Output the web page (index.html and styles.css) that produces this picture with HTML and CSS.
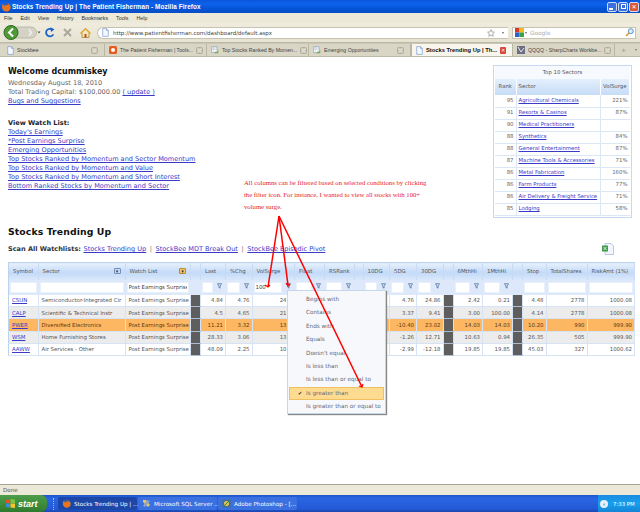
FILE: index.html
```html
<!DOCTYPE html>
<html lang="en">
<head>
  <meta charset="UTF-8">
  <meta name="viewport" content="width=device-width, initial-scale=1.0">
  <title>Stocks Trending Up | The Patient Fisherman - Mozilla Firefox</title>
  <link rel="stylesheet" href="styles.css">
</head>
<body>

  <svg class="defs" width="0" height="0">
    <symbol id="funnel" viewBox="0 0 7 8">
      <path d="M.5.8h6L4.3 4v3L2.7 6.2V4z" fill="#cfe0f5" stroke="#34558a" stroke-width=".8"/>
    </symbol>
    <symbol id="page" viewBox="0 0 10 12">
      <path d="M1 .5h5.500L9 3v8.500H1z" fill="#f4f8ff" stroke="#7d9ccf"/>
      <path d="M6.500.5V3H9" fill="#cfdef5" stroke="#7d9ccf"/>
    </symbol>
    <symbol id="chart" viewBox="0 0 12 12">
      <path d="M1 1h8v9H1z" fill="#fff" stroke="#8a9ab5"/>
      <path d="M2 3h6M2 5h6M4 1v8" stroke="#a8b6cc" stroke-width=".7"/>
      <path d="M5 11l2-3 1.500 1.500L11 6v5z" fill="#6cb33f"/>
    </symbol>
    <symbol id="close" viewBox="0 0 7 7">
      <rect x=".5" y=".5" width="6" height="6" rx="1" fill="#cfccbc" stroke="#b2afa0"/>
      <path d="M2.200 2.200l2.600 2.600M4.800 2.200L2.200 4.800" stroke="#f1efe6" stroke-width=".8"/>
    </symbol>
    <symbol id="fox" viewBox="0 0 12 12">
      <circle cx="6" cy="6" r="5.500" fill="#2f5fb8"/>
      <path d="M2 2.500C.5 6 1.500 11.500 6.500 11.500c3.500 0 5.500-3 5-5.500C11 3.500 9.500 2 8 1.500c.8 1 1 2 .5 2.500C7 3 5 3.500 4.500 5 3.800 4.500 3 3.500 2 2.500z" fill="#e8741c"/>
    </symbol>
  </svg>

  <!-- Browser chrome -->
  <div class="titlebar">
    <svg class="title-icon" width="10" height="10"><use href="#fox"/></svg>
    <span class="title-text">Stocks Trending Up | The Patient Fisherman - Mozilla Firefox</span>
    <div class="win-buttons">
      <span class="win-btn"><i class="win-min"></i></span>
      <span class="win-btn"><i class="win-max"></i></span>
      <span class="win-btn win-close">✕</span>
    </div>
  </div>

  <div class="menubar">
    <span>File</span><span>Edit</span><span>View</span><span>History</span><span>Bookmarks</span><span>Tools</span><span>Help</span>
  </div>

  <div class="navbar">
    <svg class="nav-back" width="38" height="15" viewBox="0 0 38 15">
      <path d="M8 2h20a5.500 5.500 0 0 1 0 11H8z" fill="#d5d3c6" stroke="#b3b1a3" stroke-width=".8"/>
      <path d="M26 4.500l2.500 3-2.500 3" fill="none" stroke="#f4f3ec" stroke-width="1.400"/>
      <path d="M34.500 6.500h3l-1.500 2z" fill="#555"/>
      <circle cx="8" cy="7.500" r="7" fill="#4f9a37" stroke="#2c6a22"/>
      <path d="M10 3.500L6 7.500l4 4" fill="none" stroke="#fff" stroke-width="2"/>
    </svg>
    <svg class="nav-icon" width="10" height="11" viewBox="0 0 10 11">
      <path d="M8.300 7.300A3.800 3.800 0 1 1 7.500 2.800" fill="none" stroke="#1c64c8" stroke-width="1.800"/>
      <path d="M5.500.2L9.500 2.500 6 5z" fill="#1c64c8"/>
    </svg>
    <svg class="nav-icon" width="9" height="9" viewBox="0 0 9 9">
      <path d="M1 1l7 7M8 1L1 8" stroke="#a9a89c" stroke-width="2"/>
    </svg>
    <svg class="nav-icon nav-home" width="11" height="10" viewBox="0 0 11 10">
      <path d="M2 5v4.500h7V5" fill="#f6e5ad" stroke="#a0762a" stroke-width=".7"/>
      <path d="M.5 5.500L5.500.8l5 4.700" fill="none" stroke="#e2a21e" stroke-width="1.400"/>
      <rect x="4.500" y="6" width="2" height="3.500" fill="#b3541e"/>
    </svg>
    <div class="urlbar">
      <svg width="7" height="9"><use href="#page"/></svg>
      <span class="url-text">http://www.patientfisherman.com/dashboard/default.aspx</span>
      <svg class="url-star" width="8" height="8" viewBox="0 0 10 10">
        <path d="M5 .8l1.300 2.800 3 .4-2.200 2.100.6 3L5 7.600 2.300 9.100l.6-3L.7 4l3-.4z" fill="#fff" stroke="#85837a" stroke-width=".8"/>
      </svg>
      <span class="url-drop"></span>
    </div>
    <div class="searchbar">
      <svg width="9" height="9" viewBox="0 0 9 9">
        <rect width="4.500" height="4.500" fill="#d9352a"/>
        <rect x="4.500" width="4.500" height="4.500" fill="#f0bb1e"/>
        <rect y="4.500" width="4.500" height="4.500" fill="#2a62c9"/>
        <rect x="4.500" y="4.500" width="4.500" height="4.500" fill="#3aa14a"/>
      </svg>
      <span class="url-drop"></span>
      <span class="search-text">Google</span>
      <svg class="search-icon" width="9" height="9" viewBox="0 0 9 9">
        <circle cx="5.800" cy="3.200" r="2.500" fill="#d8ecfa" stroke="#5b93c7"/>
        <path d="M4 5L1 8" stroke="#d09a3c" stroke-width="1.600"/>
      </svg>
    </div>
  </div>

  <div class="tabbar">
    <div class="tab"><svg width="7" height="9"><use href="#page"/></svg><span>Stockbee</span><svg class="tab-x" width="7" height="7"><use href="#close"/></svg></div>
    <div class="tab"><svg width="8" height="8" viewBox="0 0 8 8"><rect width="8" height="8" rx="1.500" fill="#e85c1e"/><circle cx="4" cy="4" r="2" fill="#fff"/></svg><span>The Patient Fisherman | Tools...</span><svg class="tab-x" width="7" height="7"><use href="#close"/></svg></div>
    <div class="tab"><svg width="8" height="8"><use href="#chart"/></svg><span>Top Stocks Ranked By Momen...</span><svg class="tab-x" width="7" height="7"><use href="#close"/></svg></div>
    <div class="tab"><svg width="8" height="8"><use href="#chart"/></svg><span>Emerging Opportunities</span><svg class="tab-x" width="7" height="7"><use href="#close"/></svg></div>
    <div class="tab tab-active"><svg width="7" height="9"><use href="#page"/></svg><span>Stocks Trending Up | Th...</span><span class="tab-red">✕</span></div>
    <div class="tab"><svg width="8" height="8" viewBox="0 0 8 8"><rect width="8" height="8" fill="#6d6d86"/><path d="M1 1l3 5 3-4" fill="none" stroke="#e4e4ee"/></svg><span>QQQQ - SharpCharts Workbe...</span><svg class="tab-x" width="7" height="7"><use href="#close"/></svg></div>
    <div class="tab-tools"><span class="tab-plus">+</span><span class="tab-arrow"></span></div>
  </div>

  <!-- Page -->
  <div class="content">
    <div class="top-row">
      <div class="welcome">
        <h1>Welcome dcummiskey</h1>
        <div class="muted">Wednesday August 18, 2010</div>
        <div class="muted">Total Trading Capital: $100,000.00 <a href="#">( update )</a></div>
        <div><a href="#">Bugs and Suggestions</a></div>
        <div class="watch-title">View Watch List:</div>
        <div><a href="#">Today's Earnings</a></div>
        <div><a href="#">*Post Earnings Surprise</a></div>
        <div><a href="#">Emerging Opportunities</a></div>
        <div><a href="#">Top Stocks Ranked by Momentum and Sector Momentum</a></div>
        <div><a href="#">Top Stocks Ranked by Momentum and Value</a></div>
        <div><a href="#">Top Stocks Ranked by Momentum and Short Interest</a></div>
        <div><a href="#">Bottom Ranked Stocks by Momentum and Sector</a></div>
      </div>

      <div class="sectors">
        <div class="sectors-title">Top 10 Sectors</div>
        <table class="sector-table">
          <thead>
            <tr><th class="s-rank">Rank</th><th class="s-name">Sector</th><th class="s-vol">VolSurge</th></tr>
          </thead>
          <tbody>
            <tr><td>95</td><td><a href="#">Agricultural Chemicals</a></td><td>221%</td></tr>
            <tr><td>91</td><td><a href="#">Resorts &amp; Casinos</a></td><td>87%</td></tr>
            <tr><td>90</td><td><a href="#">Medical Practitioners</a></td><td></td></tr>
            <tr><td>88</td><td><a href="#">Synthetics</a></td><td>84%</td></tr>
            <tr><td>88</td><td><a href="#">General Entertainment</a></td><td>87%</td></tr>
            <tr><td>87</td><td><a href="#">Machine Tools &amp; Accessories</a></td><td>71%</td></tr>
            <tr><td>86</td><td><a href="#">Metal Fabrication</a></td><td>160%</td></tr>
            <tr><td>86</td><td><a href="#">Farm Products</a></td><td>77%</td></tr>
            <tr><td>86</td><td><a href="#">Air Delivery &amp; Freight Service</a></td><td>71%</td></tr>
            <tr><td>85</td><td><a href="#">Lodging</a></td><td>58%</td></tr>
          </tbody>
        </table>
      </div>
    </div>

    <h2>Stocks Trending Up</h2>
    <div class="scan-row">
      <b>Scan All Watchlists:</b> <a href="#">Stocks Trending Up</a> <span class="pipe">|</span> <a href="#">StockBee MDT Break Out</a> <span class="pipe">|</span> <a href="#">StockBee Episodic Pivot</a>
      <svg class="excel" width="12" height="12" viewBox="0 0 12 12">
        <path d="M3 .5h6l2.500 2.500v8.500H3z" fill="#f2f6fc" stroke="#9fb4d3" stroke-width=".7"/>
        <rect x="0" y="2.500" width="6" height="6" fill="#3f9a4a"/>
        <path d="M1.500 4l3 3M4.500 4l-3 3" stroke="#fff" stroke-width=".8"/>
      </svg>
    </div>

    <table class="grid">
      <colgroup>
        <col class="c29"><col class="c87"><col class="c65"><col class="c10"><col class="c25"><col class="c26"><col class="c42"><col class="c30"><col class="c29"><col class="c9"><col class="c26"><col class="c27"><col class="c26"><col class="c10"><col class="c29"><col class="c30"><col class="c10"><col class="c23"><col class="c41"><col class="c48">
      </colgroup>
      <thead>
        <tr>
          <th>Symbol</th>
          <th><div class="th-drop">Sector<span class="drop-btn">▾</span></div></th>
          <th><div class="th-drop">Watch List<span class="drop-btn drop-on">▾</span></div></th>
          <th></th><th>Last</th><th>%Chg</th><th>VolSurge</th><th>Float</th><th>RSRank</th><th></th><th>10DG</th><th>5DG</th><th>30DG</th><th></th><th>6MthHi</th><th>1MthHi</th><th></th><th>Stop</th><th>TotalShares</th><th>RiskAmt (1%)</th>
        </tr>
        <tr class="filters">
          <td><div class="flt"><input class="box"></div></td>
          <td><div class="flt"><input class="box"></div></td>
          <td><div class="flt"><input class="box" value="Post Earnings Surprise"></div></td>
          <td></td>
          <td><div class="flt"><input class="box"><svg width="5" height="6"><use href="#funnel"/></svg></div></td>
          <td><div class="flt"><input class="box"><svg width="5" height="6"><use href="#funnel"/></svg></div></td>
          <td><div class="flt"><input class="box" value="100"><svg width="5" height="6"><use href="#funnel"/></svg></div></td>
          <td><div class="flt"><input class="box"><svg width="5" height="6"><use href="#funnel"/></svg></div></td>
          <td><div class="flt"><input class="box"><svg width="5" height="6"><use href="#funnel"/></svg></div></td>
          <td></td>
          <td><div class="flt"><input class="box"><svg width="5" height="6"><use href="#funnel"/></svg></div></td>
          <td><div class="flt"><input class="box"><svg width="5" height="6"><use href="#funnel"/></svg></div></td>
          <td><div class="flt"><input class="box"><svg width="5" height="6"><use href="#funnel"/></svg></div></td>
          <td></td>
          <td><div class="flt"><input class="box"><svg width="5" height="6"><use href="#funnel"/></svg></div></td>
          <td><div class="flt"><input class="box"><svg width="5" height="6"><use href="#funnel"/></svg></div></td>
          <td></td>
          <td><div class="flt"><input class="box"></div></td>
          <td><div class="flt"><input class="box"></div></td>
          <td><div class="flt"><input class="box"></div></td>
        </tr>
      </thead>
      <tbody>
        <tr>
          <td class="txt"><a href="#">CSUN</a></td><td class="txt">Semiconductor-Integrated Cir</td><td class="txt">Post Earnings Surprise</td><td class="dark"></td>
          <td>4.84</td><td>4.76</td><td class="under">24</td><td></td><td></td><td></td><td></td><td>4.76</td><td>24.86</td><td class="dark"></td><td>2.42</td><td>0.21</td><td class="dark"></td><td>4.48</td><td>2778</td><td>1000.08</td>
        </tr>
        <tr class="alt">
          <td class="txt"><a href="#">CALP</a></td><td class="txt">Scientific &amp; Technical Instr</td><td class="txt">Post Earnings Surprise</td><td class="dark"></td>
          <td>4.5</td><td>4.65</td><td class="under">21</td><td></td><td></td><td></td><td></td><td>3.37</td><td>9.41</td><td class="dark"></td><td>3.00</td><td>100.00</td><td class="dark"></td><td>4.14</td><td>2778</td><td>1000.08</td>
        </tr>
        <tr class="hot">
          <td class="txt"><a href="#">PWER</a></td><td class="txt">Diversified Electronics</td><td class="txt">Post Earnings Surprise</td><td class="dark"></td>
          <td>11.21</td><td>3.32</td><td class="under">13</td><td></td><td></td><td></td><td></td><td>-10.40</td><td>23.02</td><td class="dark"></td><td>14.03</td><td>14.03</td><td class="dark"></td><td>10.20</td><td>990</td><td>999.90</td>
        </tr>
        <tr class="alt">
          <td class="txt"><a href="#">WSM</a></td><td class="txt">Home Furnishing Stores</td><td class="txt">Post Earnings Surprise</td><td class="dark"></td>
          <td>28.33</td><td>3.06</td><td class="under">13</td><td></td><td></td><td></td><td></td><td>-1.26</td><td>12.71</td><td class="dark"></td><td>10.63</td><td>0.94</td><td class="dark"></td><td>26.35</td><td>505</td><td>999.90</td>
        </tr>
        <tr>
          <td class="txt"><a href="#">AAWW</a></td><td class="txt">Air Services - Other</td><td class="txt">Post Earnings Surprise</td><td class="dark"></td>
          <td>48.09</td><td>2.25</td><td class="under">10</td><td></td><td></td><td></td><td></td><td>-2.99</td><td>-12.18</td><td class="dark"></td><td>19.85</td><td>19.85</td><td class="dark"></td><td>45.03</td><td>327</td><td>1000.62</td>
        </tr>
      </tbody>
    </table>

    <!-- Filter menu, drawn over the grid -->
    <ul class="filter-menu">
      <li>Begins with</li>
      <li>Contains</li>
      <li>Ends with</li>
      <li>Equals</li>
      <li>Doesn't equal</li>
      <li>Is less than</li>
      <li>Is less than or equal to</li>
      <li class="checked">Is greater than</li>
      <li>Is greater than or equal to</li>
    </ul>

    <!-- Annotation added on the screenshot -->
    <p class="note">All columns can be filtered based on selected conditions by clicking<br>the filter icon. For instance, I wanted to view all stocks with 100+<br>volume surge.</p>
    <svg class="arrows" width="640" height="428" viewBox="0 56 640 428">
      <g fill="none" stroke="#f00" stroke-width="1.500">
        <path d="M279 215L268 286"/>
        <path d="M279 215L288 284"/>
        <path d="M279 215L362 386"/>
        <path d="M265 284l3 2 2-2M286 282l2 3 2-2M359 385l3 1 1-3" stroke-width="1.200"/>
      </g>
    </svg>
  </div>

  <div class="statusbar">Done</div>

  <div class="taskbar">
    <div class="start-btn">
      <svg width="9" height="9" viewBox="0 0 9 9">
        <path d="M0 1l4-1v4H0z" fill="#e8502a"/><path d="M4.500 0L9 .6V4H4.500z" fill="#7fc241"/>
        <path d="M0 4.500h4V8.500L0 8z" fill="#3c8ae0"/><path d="M4.500 4.500H9V9L4.500 8.500z" fill="#f5c52c"/>
      </svg>
      <span>start</span>
    </div>
    <span class="quick"></span>
    <div class="task task-active"><svg width="9" height="9"><use href="#fox"/></svg><span>Stocks Trending Up | ...</span></div>
    <div class="task">
      <svg width="9" height="9" viewBox="0 0 9 9"><path d="M1 1h3l4 5-2 2-5-5z" fill="#e6c86a"/><path d="M5 1l3 1-5 6-2-1z" fill="#8fa3c7"/></svg>
      <span>Microsoft SQL Server ...</span>
    </div>
    <div class="task">
      <svg width="9" height="9" viewBox="0 0 9 9"><rect width="9" height="9" rx="1" fill="#3e6fa8"/><circle cx="4.500" cy="4.500" r="2.500" fill="#e9c24e"/><path d="M2 7l5-5" stroke="#2b8a4b"/></svg>
      <span>Adobe Photoshop - [...</span>
    </div>
    <div class="tray">
      <span class="tray-arrow">‹</span>
      <span>7:33 PM</span>
    </div>
  </div>

</body>
</html>
```

FILE: styles.css
```css
* {
  box-sizing: border-box;
}

html, body {
  margin: 0;
  padding: 0;
}

body {
  width: 640px;
  height: 512px;
  overflow: hidden;
  display: flex;
  flex-direction: column;
  font-family: "DejaVu Sans", sans-serif;
  font-size: 6.55px;
  color: #333;
  background-color: #fff;
}

a {
  color: #3a3ac8;
}

svg {
  flex: none;
}

.defs {
  position: absolute;
}

/* Title bar */
.titlebar {
  height: 13px;
  flex: none;
  display: flex;
  align-items: center;
  padding: 0 1px 0 1px;
  background: linear-gradient(to bottom, #0a56d8, #0e62ec 30%, #0453d4 70%, #0a4ec4);
}

.title-icon {
  margin-right: 1px;
}

.title-text {
  color: #fff;
  font-family: "Liberation Sans", sans-serif;
  font-weight: bold;
  font-size: 6.35px;
  letter-spacing: 0.1px;
}

.win-buttons {
  margin-left: auto;
  display: flex;
  gap: 1px;
}

.win-btn {
  width: 10px;
  height: 10px;
  display: flex;
  align-items: center;
  justify-content: center;
  position: relative;
  color: #fff;
  font-size: 6px;
  font-weight: bold;
  background-color: #3a6fe0;
  border: 1px solid #cfdcf8;
  border-radius: 2px;
}

.win-close {
  background-color: #dc5a34;
}

.win-min {
  width: 4px;
  height: 2px;
  margin: 4px 3px 0 0;
  background-color: #fff;
}

.win-max {
  width: 5px;
  height: 5px;
  border: 1px solid #fff;
}

/* Menu bar */
.menubar {
  height: 10px;
  flex: none;
  display: flex;
  align-items: center;
  gap: 8px;
  padding-left: 4px;
  color: #333;
  font-family: "Liberation Sans", sans-serif;
  font-size: 5.3px;
  background-color: #ece9d8;
}

/* Nav bar */
.navbar {
  height: 20px;
  flex: none;
  display: flex;
  align-items: center;
  padding: 0 3px 0 3px;
  background: linear-gradient(to bottom, #efecdf, #e6e3d2);
  border-bottom: 1px solid #bdbaa8;
}

.nav-back {
  margin-right: 4px;
}

.nav-icon {
  margin-right: 8px;
}

.nav-home {
  margin-right: 6px;
}

.urlbar {
  width: 411px;
  height: 12px;
  flex: none;
  display: flex;
  align-items: center;
  gap: 4px;
  padding: 0 4px;
  background-color: #fff;
  border: 1px solid #c6c3b2;
  border-radius: 6px 0 0 6px;
  border-right: 0;
}

.url-text {
  color: #444;
  font-size: 5.5px;
}

.url-star {
  margin-left: auto;
  margin-right: 3px;
}

.url-drop {
  width: 0;
  height: 0;
  border-left: 1.5px solid transparent;
  border-right: 1.5px solid transparent;
  border-top: 2px solid #666;
}

.searchbar {
  width: 124px;
  height: 12px;
  flex: none;
  display: flex;
  align-items: center;
  gap: 1px;
  margin-left: 4px;
  padding: 0 1px 0 2px;
  background-color: #fff;
  border: 1px solid #c6c3b2;
}

.search-text {
  margin-left: 2px;
  color: #aaa;
  font-size: 5.8px;
}

.search-icon {
  margin-left: auto;
}

/* Tabs */
.tabbar {
  height: 14px;
  flex: none;
  display: flex;
  align-items: stretch;
  padding-left: 3px;
  font-family: "Liberation Sans", sans-serif;
  font-size: 5.2px;
  color: #444;
  background-color: #d9d6c6;
  border-top: 1px solid #c9c6b5;
  border-bottom: 1px solid #bdbaa8;
}

.tab {
  width: 102px;
  flex: none;
  display: flex;
  align-items: center;
  gap: 3px;
  padding: 0 6px 0 4px;
  border-right: 1px solid #b9b6a5;
  white-space: nowrap;
  overflow: hidden;
}

.tab-x {
  margin-left: auto;
}

.tab-active {
  color: #111;
  font-size: 5.8px;
  font-weight: bold;
  background-color: #f7f5ec;
  border-left: 1px solid #b9b6a5;
}

.tab-red {
  margin-left: auto;
  width: 7px;
  height: 7px;
  display: flex;
  align-items: center;
  justify-content: center;
  color: #fff;
  font-size: 5px;
  font-weight: normal;
  background-color: #d8473f;
  border-radius: 1px;
}

.tab-tools {
  flex: 1;
  display: flex;
  align-items: center;
  justify-content: flex-end;
  gap: 9px;
  padding-right: 3px;
  color: #999;
}

.tab-plus {
  font-size: 8px;
}

.tab-arrow {
  width: 0;
  height: 0;
  border-left: 1.5px solid transparent;
  border-right: 1.5px solid transparent;
  border-top: 2px solid #777;
}

/* Page content */
.content {
  flex: 1;
  position: relative;
  min-height: 0;
  padding: 9px 8px 0;
  background-color: #fff;
  overflow: hidden;
}

.top-row {
  height: 160px;
  display: flex;
  justify-content: space-between;
  align-items: flex-start;
  line-height: 9.05px;
}

.welcome {
  color: #111;
}

.welcome h1 {
  margin: 0 0 2px;
  font-size: 8px;
  line-height: 11px;
  color: #111;
}

.muted {
  color: #666;
}

.watch-title {
  margin-top: 13px;
  font-weight: bold;
  color: #222;
}

/* Sectors box */
.sectors {
  width: 139px;
  margin-top: -1px;
  padding: 0 1px 1px;
  border: 1px solid #c6d9f3;
}

.sectors-title {
  height: 13px;
  line-height: 13px;
  text-align: center;
  color: #555;
  font-size: 5.4px;
  background-color: #f6f9fe;
}

.sector-table {
  width: 100%;
  table-layout: fixed;
  border-collapse: collapse;
  font-size: 5.35px;
  line-height: 1;
}

.sector-table th {
  height: 16px;
  padding: 0 2px;
  font-weight: normal;
  color: #555;
  background: linear-gradient(to bottom, #e4effc, #c6dcf7);
  border-right: 1px solid #fff;
}

.s-rank {
  width: 21px;
}

.s-name {
  width: 84px;
  text-align: left;
}

.sector-table td {
  height: 12px;
  padding: 0 2px;
  text-align: right;
  color: #666;
  white-space: nowrap;
  border-bottom: 1px solid #dce7f6;
  border-right: 1px solid #dce7f6;
}

.sector-table td:nth-child(2) {
  text-align: left;
}

.sector-table td:last-child {
  border-right: 0;
}

/* Main grid */
h2 {
  margin: 0;
  height: 12px;
  font-size: 9.300px;
  line-height: 12px;
  color: #111;
  letter-spacing: 0.1px;
}

.scan-row {
  position: relative;
  display: flex;
  align-items: center;
  gap: 2.6px;
  height: 12px;
  margin-top: 5px;
  margin-bottom: 7px;
  white-space: pre;
}

.pipe {
  color: #777;
  padding: 0 1px;
}

.excel {
  margin-left: auto;
  margin-right: 18px;
}

.grid {
  width: 624px;
  table-layout: fixed;
  border-collapse: collapse;
  border: 1px solid #bcd3f0;
  font-size: 5.4px;
}

.c9 { width: 9px; }
.c10 { width: 10px; }
.c23 { width: 23.5px; }
.c25 { width: 25px; }
.c26 { width: 26.5px; }
.c27 { width: 27px; }
.c29 { width: 29.5px; }
.c30 { width: 30px; }
.c41 { width: 41px; }
.c42 { width: 42.5px; }
.c48 { width: 47.5px; }
.c65 { width: 65.5px; }
.c87 { width: 87px; }

.grid th {
  height: 17px;
  padding: 0 1px 0 4px;
  text-align: left;
  font-weight: normal;
  color: #555;
  white-space: nowrap;
  background: linear-gradient(to bottom, #e6f0fc, #c3daf8 55%, #dbe9fb);
  border-right: 1px solid #c9dbf3;
}

.th-drop {
  display: flex;
  align-items: center;
  justify-content: space-between;
  padding-right: 3px;
}

.drop-btn {
  width: 7px;
  height: 6px;
  display: flex;
  align-items: center;
  justify-content: center;
  font-size: 5px;
  color: #234;
  background-color: #c9dcf6;
  border: 1px solid #6f8fbd;
  border-radius: 1px;
}

.drop-on {
  background-color: #f7c766;
  border-color: #b98a2c;
}

.filters td {
  height: 15px;
  padding: 0;
  background-color: #dde9fa;
  border-right: 1px solid #dde9fa;
}

.flt {
  display: flex;
  align-items: center;
  gap: 2px;
  padding: 0 1px 0 1px;
}

.box {
  flex: 1;
  min-width: 0;
  width: 100%;
  height: 11px;
  margin: 0;
  padding: 0 1px;
  border: 1px solid #e8f0fb;
  outline: 0;
  border-radius: 0;
  font-family: "DejaVu Sans", sans-serif;
  font-size: 5.4px;
  color: #444;
  background-color: #fff;
}

.flt svg {
  margin: 0 2px 3px 2px;
}

.grid tbody td {
  height: 12.2px;
  padding: 0 2px;
  text-align: right;
  color: #555;
  white-space: nowrap;
  overflow: hidden;
  border-right: 1px solid #d5e3f5;
  border-bottom: 1px solid #d5e3f5;
  background-color: #fff;
}

/* the menu hides the rest of this column */
.grid tbody td.under {
  padding-right: 8px;
  border-right: 0;
}

.grid tbody td.txt {
  text-align: left;
  padding-left: 3px;
}

.grid tbody tr.alt td {
  background-color: #ececec;
}

.grid tbody tr.hot td {
  color: #5a3a10;
  background-color: #fdb762;
}

.grid tbody td.dark,
.grid tbody tr.alt td.dark,
.grid tbody tr.hot td.dark {
  background-color: #5e5e5e;
  border-bottom: 1px solid #aebccd;
}

/* Filter dropdown */
.filter-menu {
  position: absolute;
  left: 287px;
  top: 233px;
  width: 99px;
  height: 124px;
  margin: 0;
  padding: 2px 1px;
  list-style: none;
  color: #667;
  font-size: 5.7px;
  background-color: #f7f8fb;
  border: 1px solid #c6d6ec;
  box-shadow: 1px 1px 1px #888;
}

.filter-menu li {
  height: 13.4px;
  line-height: 13.4px;
  padding-left: 17px;
}

.filter-menu .checked {
  position: relative;
  background-color: #fddc92;
  border: 1px solid #f0c060;
  line-height: 11.4px;
  padding-left: 16px;
}

.filter-menu .checked::before {
  content: "✔";
  position: absolute;
  left: 8px;
  font-size: 5px;
  color: #223;
}

/* Annotation overlay */
.note {
  position: absolute;
  left: 244px;
  top: 119.500px;
  margin: 0;
  color: #e8222a;
  font-family: "Liberation Serif", serif;
  font-size: 6.7px;
  line-height: 12px;
  white-space: nowrap;
}

.arrows {
  position: absolute;
  left: 0;
  top: 0;
  pointer-events: none;
}

/* Status + task bar */
.statusbar {
  height: 11px;
  flex: none;
  padding-left: 3px;
  line-height: 10px;
  font-size: 5.6px;
  color: #555;
  background-color: #ece9d8;
  border-top: 1px solid #a5a294;
}

.taskbar {
  height: 17px;
  flex: none;
  display: flex;
  align-items: center;
  color: #fff;
  font-size: 5.6px;
  background: linear-gradient(to bottom, #1c58c9, #2a66e2 20%, #2459d8 80%, #1a48b0);
}

.start-btn {
  width: 47px;
  height: 100%;
  flex: none;
  display: flex;
  align-items: center;
  gap: 3px;
  padding-left: 6px;
  font-family: "Liberation Sans", sans-serif;
  font-style: italic;
  font-weight: bold;
  font-size: 9px;
  background: linear-gradient(to bottom, #4f9d4a, #3b8a38 60%, #2f7a2e);
  border-radius: 0 6px 6px 0;
}

.quick {
  width: 2px;
  height: 12px;
  margin: 0 3px 0 6px;
  border-left: 1px dotted #9fc0f5;
  flex: none;
}

.task {
  width: 79px;
  height: 13px;
  flex: none;
  display: flex;
  align-items: center;
  gap: 3px;
  padding-left: 4px;
  margin-right: 1px;
  white-space: nowrap;
  background-color: #3a70e0;
  border-radius: 2px;
}

.task-active {
  background-color: #1c47a8;
}

.tray {
  margin-left: auto;
  width: 42px;
  height: 100%;
  display: flex;
  align-items: center;
  gap: 5px;
  padding-left: 2px;
  font-size: 5.4px;
  background: linear-gradient(to bottom, #1a8be0, #18a0ee 50%, #1584d6);
}

.tray-arrow {
  width: 8px;
  height: 8px;
  display: flex;
  align-items: center;
  justify-content: center;
  color: #1a58c0;
  font-weight: bold;
  background-color: #e6f0fb;
  border-radius: 50%;
}
```
